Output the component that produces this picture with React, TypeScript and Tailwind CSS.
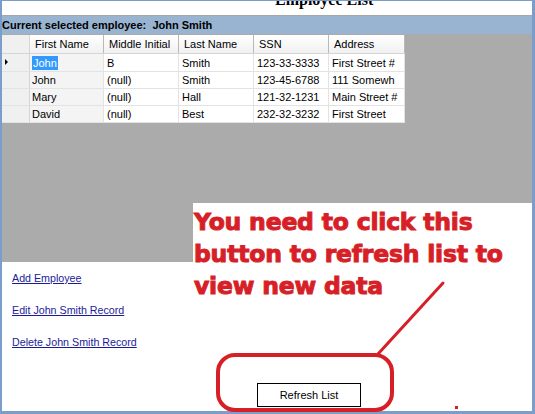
import React from "react";

const COLS = [
  { label: "First Name", w: "w-[74px]" },
  { label: "Middle Initial", w: "w-[75px]" },
  { label: "Last Name", w: "w-[75px]" },
  { label: "SSN", w: "w-[75px]" },
  { label: "Address", w: "w-[76px]" },
];

const ROWS: string[][] = [
  ["John", "B", "Smith", "123-33-3333", "First Street #"],
  ["John", "(null)", "Smith", "123-45-6788", "111 Somewh"],
  ["Mary", "(null)", "Hall", "121-32-1231", "Main Street #"],
  ["David", "(null)", "Best", "232-32-3232", "First Street"],
];

const LINKS = ["Add Employee", "Edit John Smith Record", "Delete John Smith Record"];

function EmployeeGrid() {
  return (
    <div className="w-[403px] text-[11px] text-black">
      <div className="flex h-[19px] bg-gradient-to-b from-white to-[#f1f1f1] border-b border-[#d5d5d5]">
        <div className="w-[28px] shrink-0 border-r border-[#d5d5d5] bg-[#f0f0f0]" />
        {COLS.map((c) => (
          <div
            key={c.label}
            className={`${c.w} shrink-0 border-r border-[#b9b9b9] pl-[5px] leading-[18px] whitespace-nowrap overflow-hidden`}
          >
            {c.label}
          </div>
        ))}
      </div>
      {ROWS.map((row, i) => (
        <div
          key={i}
          className={`flex ${i === 0 ? "h-[18px]" : "h-[17px]"} bg-white border-b border-[#e3e3e3]`}
        >
          <div className="relative w-[28px] shrink-0 border-r border-[#d5d5d5] bg-[#f0f0f0]">
            {i === 0 && (
              <span className="absolute left-[3px] top-[5px] h-0 w-0 border-y-[3px] border-l-[3px] border-y-transparent border-l-black" />
            )}
          </div>
          {row.map((cell, j) => (
            <div
              key={j}
              className={`${COLS[j].w} flex shrink-0 items-center overflow-hidden whitespace-nowrap border-r border-[#e3e3e3] ${
                j === 0 ? "pl-[2px] bg-[#f4f4f4]" : "pl-[3px]"
              }`}
            >
              {i === 0 && j === 0 ? (
                <span className="bg-[#3399ff] px-px leading-[14px] text-white">{cell}</span>
              ) : (
                <span className="leading-[14px]">{cell}</span>
              )}
            </div>
          ))}
        </div>
      ))}
    </div>
  );
}

export default function App() {
  return (
    <div className="relative h-[414px] w-[535px] overflow-hidden bg-white font-['Liberation_Sans',Arial,sans-serif]">
      <div className="flex h-full flex-col border-t border-l-2 border-r-[3px] border-b-[3px] border-[#7b9dc9]">
        <div className="h-[15px] shrink-0 overflow-hidden border-b border-[#a7a7a7] bg-white pl-[273px]">
          <div className="-mt-[9px] font-['Liberation_Serif','Times_New_Roman',serif] text-[16px] font-bold leading-none text-black">
            Employee List
          </div>
        </div>
        <div className="h-[18px] shrink-0 bg-[#99b4d1] text-[11px] font-bold leading-[18px] text-black whitespace-pre">
          Current selected employee:  John Smith
        </div>
        <div className="h-[228px] shrink-0 bg-[#ababab] pt-px">
          <EmployeeGrid />
        </div>
        <div className="flex flex-1 flex-col bg-white">
          <div className="flex flex-col gap-[19px] pl-[10px] pt-[10px]">
            {LINKS.map((l) => (
              <a
                key={l}
                href="#"
                className="w-fit text-[10.7px] leading-[13px] text-[#1b1b99] underline underline-offset-1"
              >
                {l}
              </a>
            ))}
          </div>
          <div className="mt-auto mb-[4px] pl-[255px]">
            <button className="h-[24px] w-[104px] border border-black bg-white text-[11px] text-black">
              Refresh List
            </button>
          </div>
        </div>
      </div>

      {/* pasted annotation */}
      <div className="absolute left-[193px] top-[203px] h-[59px] w-[339px] bg-white" />
      <div className="absolute left-[194px] top-[206px] whitespace-nowrap font-['DejaVu_Sans',sans-serif] text-[23.5px] font-bold leading-[32px] tracking-[-0.2px] text-[#d71f27] [-webkit-text-stroke:1px_#d71f27]">
        <div>You need to click this</div>
        <div>button to refresh list to</div>
        <div>view new data</div>
      </div>
      <svg
        className="pointer-events-none absolute left-0 top-0"
        width="535"
        height="414"
        viewBox="0 0 535 414"
      >
        <line x1="443" y1="283" x2="378" y2="354" stroke="#d71f27" strokeWidth="3" strokeLinecap="round" />
        <rect x="218" y="355" width="174" height="55" rx="17" fill="none" stroke="#d71f27" strokeWidth="4" />
        <rect x="455" y="406" width="3" height="3" fill="#d71f27" />
      </svg>
    </div>
  );
}
